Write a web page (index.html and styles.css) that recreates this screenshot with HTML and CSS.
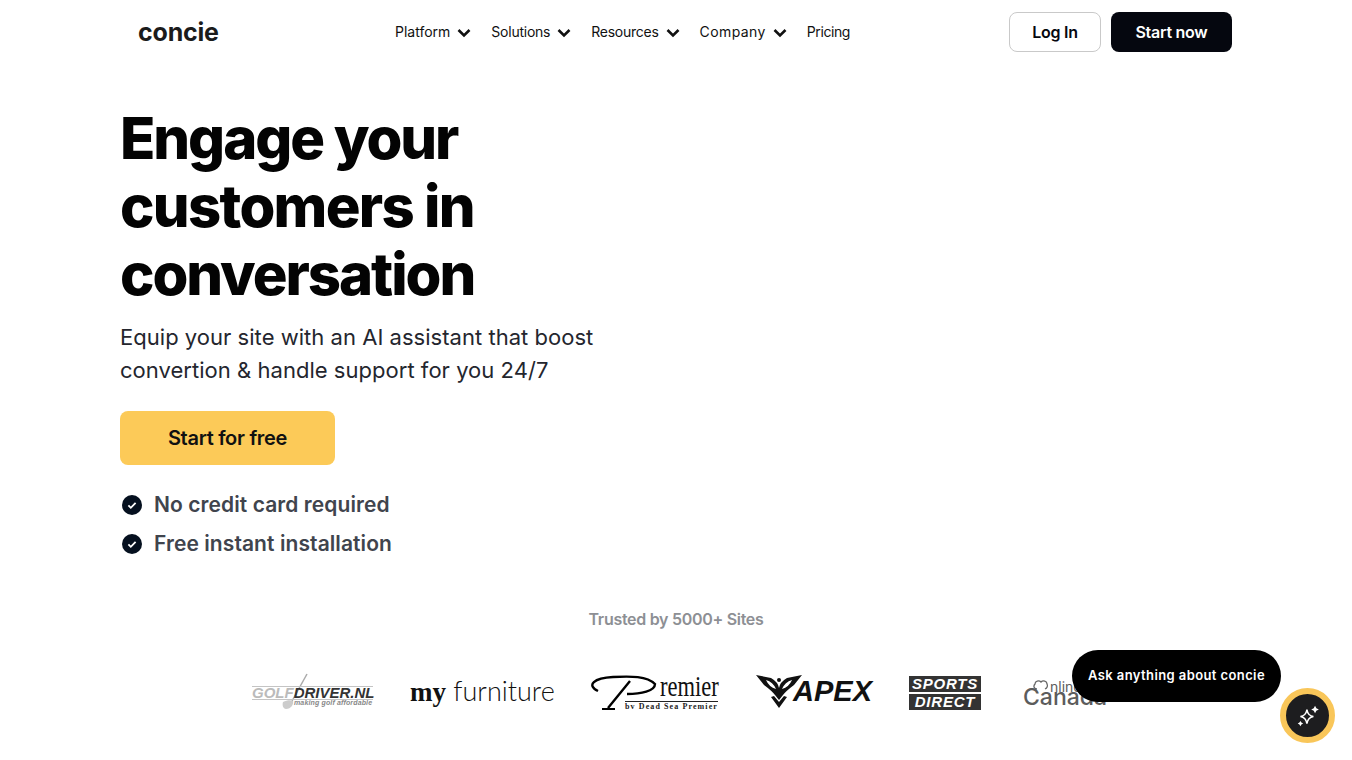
FILE: index.html
```html
<!DOCTYPE html>
<html>
<head>
	<meta charset="utf-8">
	<meta name="viewport" content="width=device-width, initial-scale=1">
	<title>concie</title>
	<link rel="stylesheet" href="styles.css">
</head>
<body>
	<header class="topbar">
		<a class="logo">concie</a>
		<nav class="nav">
			<a class="nav-item nav-platform">Platform <svg class="chev" viewBox="0 0 14 10"><path d="M1.5 2l5.500 5.500L12.500 2"/></svg></a>
			<a class="nav-item">Solutions <svg class="chev" viewBox="0 0 14 10"><path d="M1.5 2l5.500 5.500L12.500 2"/></svg></a>
			<a class="nav-item">Resources <svg class="chev" viewBox="0 0 14 10"><path d="M1.5 2l5.500 5.500L12.500 2"/></svg></a>
			<a class="nav-item nav-company">Company <svg class="chev" viewBox="0 0 14 10"><path d="M1.5 2l5.500 5.500L12.500 2"/></svg></a>
			<a class="nav-item nav-pricing">Pricing</a>
		</nav>
		<div class="actions">
			<button class="btn btn-login">Log In</button>
			<button class="btn btn-start">Start now</button>
		</div>
	</header>

	<main class="hero">
		<h1>Engage your<br><span class="h1-wide">customers in</span><br>conversation</h1>
		<p class="sub">Equip your site with an AI assistant that boost<br>convertion &amp; handle support for you 24/7</p>
		<button class="cta">Start for free</button>
		<ul class="checks">
			<li><svg class="tick" viewBox="0 0 20 20"><circle cx="10" cy="10" r="10"/><path d="M6.400 10.400l2.400 2.400 4.800-5"/></svg>No credit card required</li>
			<li><svg class="tick" viewBox="0 0 20 20"><circle cx="10" cy="10" r="10"/><path d="M6.400 10.400l2.400 2.400 4.800-5"/></svg>Free instant installation</li>
		</ul>
	</main>

	<section class="trusted">
		<p class="trusted-title">Trusted by 5000+ Sites</p>
		<div class="logos">
			<div class="lg lg-golf">
				<svg class="golf-club" viewBox="0 0 50 40"><path d="M32 3L17 30" stroke="#aaa" stroke-width="1.5" fill="none"/><path d="M8 31c4-2 8-2 10-1 1 3-2 8-7 8-3 0-4-4-3-7z" fill="#ccc"/></svg>
				<span class="golf-main"><i>GOLF</i>DRIVER.NL</span>
				<span class="golf-tag">making golf affordable</span>
			</div>
			<div class="lg lg-furn"><b>my</b> furniture</div>
			<div class="lg lg-prem">
				<svg class="prem-p" viewBox="0 0 70 36"><path d="M40 6L18 33M8 16C-4 10 4 3 23 2c18-1 34-1 42 7 0 7-14 10-28 10" fill="none" stroke="#000" stroke-width="2.400"/><path d="M12 34h13" stroke="#000" stroke-width="2"/></svg>
				<span class="prem-word">remier</span>
				<span class="prem-tag">bv Dead Sea Premier</span>
			</div>
			<div class="lg lg-apex">
				<svg class="apex-bird" viewBox="0 0 46 34">
					<path fill-rule="evenodd" d="M0 1L15 4q7 4 8 10 1-6 8-10L46 1 38 11q-8 6-11 10l-4 5-4-5Q16 17 8 11zM10 6q7 2 10 9-7-2-10-9zM36 6q-7 2-10 9 7-2 10-9z"/>
					<circle cx="23" cy="6" r="2"/>
					<path d="M15 23l3-1 5 6 5-6 3 1-8 11z"/>
				</svg>
				<span class="apex-word">APEX</span>
			</div>
			<div class="lg lg-sports"><span>SPORTS</span><span>DIRECT</span></div>
			<div class="lg lg-canada">
				<svg class="can-cloud" viewBox="0 0 16 11"><path d="M4 10C1 10 0 7 2 5c0-3 4-4 6-2 2-2 6-1 6 2 1 2 0 4-2 5" fill="none" stroke="#666" stroke-width="1.300"/></svg>
				<span class="can-top">nline</span>
				<span class="can-main">Canada</span>
			</div>
		</div>
	</section>

	<div class="bubble">Ask anything about concie</div>
	<div class="fab">
		<svg viewBox="0 0 24 24"><path d="M11 6c.6 4 2.500 6 6 6.500-3.500.6-5.400 2.500-6 6.500-.6-4-2.500-5.900-6-6.500 3.500-.5 5.400-2.500 6-6.500z" fill="none" stroke="#fff" stroke-width="1.400"/><path d="M18.500 2.500l1.200 2.300 2.300 1.200-2.300 1.200-1.200 2.300-1.200-2.300L15 6l2.300-1.200zM5 16.500l.9 1.600 1.600.9-1.600.9L5 21.500l-.9-1.600-1.600-.9 1.600-.9z" fill="#fff"/></svg>
	</div>
</body>
</html>
```

FILE: styles.css
```css
*{
	box-sizing: border-box;
}
html,body{
	height: 760px;
	overflow: hidden;
}
body{
	margin: 0;
	background: #fff;
	color: #05070f;
	font-family: "Inter", "Liberation Sans", sans-serif;
	position: relative;
}
.topbar{
	display: flex;
	align-items: center;
	height: 64px;
	padding: 0 120px 0 138px;
}
.logo{
	font-size: 25px;
	font-weight: 700;
	letter-spacing: -0.2px;
	color: #1b1b1b;
	width: 257px;
}
.nav{
	display: flex;
	gap: 20px;
	flex: 1;
	margin-bottom: 1px;
}
.nav-item{
	display: flex;
	align-items: center;
	gap: 7px;
	font-size: 14px;
	letter-spacing: -0.25px;
	color: #111;
}
.nav-platform{
	letter-spacing: 0;
}
.nav-company{
	letter-spacing: 0.4px;
}
.nav-pricing{
	letter-spacing: -0.4px;
}
.chev{
	width: 14px;
	height: 10px;
	margin-top: 2px;
}
.chev path{
	fill: none;
	stroke: #111;
	stroke-width: 2.6;
}
.actions{
	display: flex;
	gap: 10px;
}
.btn{
	height: 40px;
	border-radius: 8px;
	font-family: inherit;
	font-size: 16px;
	font-weight: 600;
	letter-spacing: -0.25px;
	padding-bottom: 2px;
}
.btn-login{
	width: 92px;
	background: #fff;
	border: 1px solid #c9c9c9;
	color: #05070f;
}
.btn-start{
	width: 121px;
	background: #05070f;
	border: none;
	color: #fff;
}
.hero{
	padding: 40px 0 0 120px;
}
h1{
	margin: 0;
	font-size: 58px;
	line-height: 68px;
	font-weight: 800;
	letter-spacing: -2.05px;
	color: #030303;
}
.h1-wide{
	letter-spacing: -1.7px;
}
.sub{
	margin: 13px 0 0;
	font-size: 22px;
	line-height: 33px;
	letter-spacing: 0.03px;
	color: #24262e;
}
.cta{
	display: block;
	width: 215px;
	height: 54px;
	margin-top: 24px;
	background: #fcca58;
	border: none;
	border-radius: 8px;
	font-family: inherit;
	font-size: 20px;
	font-weight: 600;
	letter-spacing: -0.3px;
	color: #111;
}
.checks{
	list-style: none;
	margin: 20px 0 0;
	padding: 0;
}
.checks li{
	display: flex;
	align-items: center;
	gap: 12px;
	height: 39px;
	padding-left: 2px;
	font-size: 21px;
	font-weight: 600;
	letter-spacing: 0.08px;
	color: #40444d;
}
.tick{
	width: 20px;
	height: 20px;
}
.tick circle{
	fill: #05101f;
}
.tick path{
	fill: none;
	stroke: #fff;
	stroke-width: 1.8;
}
.trusted{
	padding-top: 46px;
}
.trusted-title{
	margin: 0;
	text-align: center;
	font-size: 16px;
	font-weight: 600;
	letter-spacing: -0.3px;
	color: #8d8f94;
}
.logos{
	display: flex;
	align-items: center;
	gap: 36px;
	padding: 42px 0 0 251px;
}
.lg{
	position: relative;
	flex: none;
}
.lg-golf{
	width: 123px;
	height: 40px;
}
.golf-club{
	position: absolute;
	left: 24px;
	top: 0;
	width: 50px;
	height: 40px;
}
.golf-main{
	position: absolute;
	left: 1px;
	top: 15px;
	width: 121px;
	border-top: 1px solid #c4c4c4;
	border-bottom: 1px solid #c4c4c4;
	font: italic 700 15px/12px "Liberation Sans", sans-serif;
	color: #333;
	white-space: nowrap;
}
.golf-main i{
	color: #bbb;
}
.golf-tag{
	position: absolute;
	left: 43px;
	top: 28px;
	font: italic 700 7px "Liberation Sans", sans-serif;
	letter-spacing: 0.15px;
	color: #888;
	white-space: nowrap;
}
.lg-furn{
	width: 144px;
	font-family: "Lato", sans-serif;
	font-size: 27px;
	font-weight: 300;
	color: #111;
	white-space: nowrap;
}
.lg-furn b{
	font-family: "Liberation Serif", serif;
	font-weight: 700;
}
.lg-prem{
	width: 130px;
	height: 40px;
}
.prem-p{
	position: absolute;
	left: 0;
	top: 4px;
	width: 70px;
	height: 36px;
}
.prem-word{
	position: absolute;
	left: 70px;
	top: 0;
	font: 30px/30px "Liberation Serif", serif;
	transform: scaleX(0.75);
	transform-origin: left;
	color: #111;
}
.prem-tag{
	position: absolute;
	left: 35px;
	top: 30px;
	width: 93px;
	border-top: 1px solid #222;
	font: 700 8px/10px "Liberation Serif", serif;
	letter-spacing: 1.1px;
	white-space: nowrap;
	color: #222;
}
.lg-apex{
	display: flex;
	align-items: center;
	width: 117px;
	height: 34px;
}
.apex-bird{
	width: 46px;
	height: 34px;
	flex: none;
	fill: #111;
}
.apex-word{
	font: italic 700 29px "Liberation Sans", sans-serif;
	color: #111;
	margin-left: -9px;
}
.lg-sports{
	display: flex;
	flex-direction: column;
	gap: 2px;
	width: 72px;
	margin-top: 3px;
}
.lg-sports span{
	height: 16px;
	background: #333;
	color: #fff;
	font: italic 700 15px/16px "Liberation Sans", sans-serif;
	letter-spacing: 0.8px;
	text-align: center;
}
.lg-canada{
	width: 90px;
	height: 32px;
	margin-left: 6px;
	color: #5c5c5c;
}
.can-cloud{
	position: absolute;
	left: 10px;
	top: 4px;
	width: 16px;
	height: 11px;
}
.can-top{
	position: absolute;
	left: 27px;
	top: 6px;
	font-size: 14px;
	line-height: 12px;
	white-space: nowrap;
}
.can-main{
	position: absolute;
	left: 0;
	top: 13px;
	font-size: 23px;
	font-weight: 500;
	line-height: 18px;
	white-space: nowrap;
}
.bubble{
	position: absolute;
	left: 1072px;
	top: 650px;
	width: 209px;
	height: 52px;
	border-radius: 26px;
	background: #000;
	color: #fff;
	font-size: 13px;
	font-weight: 600;
	letter-spacing: 0.4px;
	line-height: 50px;
	text-align: center;
}
.fab{
	position: absolute;
	left: 1280px;
	top: 688px;
	width: 55px;
	height: 55px;
	border-radius: 50%;
	background: #1d1d1f;
	border: 6px solid #f9c659;
	display: flex;
	align-items: center;
	justify-content: center;
}
.fab svg{
	width: 26px;
	height: 26px;
}
```
